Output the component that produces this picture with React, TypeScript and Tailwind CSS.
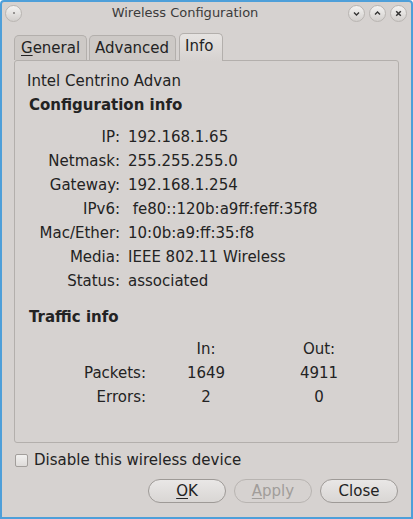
const font = { fontFamily: '"DejaVu Sans", Verdana, sans-serif' }

const config = [
  ['IP:', '192.168.1.65'],
  ['Netmask:', '255.255.255.0'],
  ['Gateway:', '192.168.1.254'],
  ['IPv6:', '\u00a0fe80::120b:a9ff:feff:35f8'],
  ['Mac/Ether:', '10:0b:a9:ff:35:f8'],
  ['Media:', 'IEEE 802.11 Wireless'],
  ['Status:', 'associated'],
]

function TitleButton({ children }: { children: React.ReactNode }) {
  return (
    <div className="w-[17px] h-[17px] rounded-full border border-[#b9b5b2] bg-gradient-to-b from-[#f4f3f2] to-[#d2cfcc] flex items-center justify-center">
      {children}
    </div>
  )
}

function Btn({ children, disabled }: { children: React.ReactNode; disabled?: boolean }) {
  return (
    <div
      className={
        'w-[78px] h-[24px] rounded-full border flex items-center justify-center text-[15px] ' +
        (disabled
          ? 'border-[#b8b4b1] bg-[#d6d2d0] text-[#a19d9a]'
          : 'border-[#9e9a97] bg-gradient-to-b from-[#e9e7e6] to-[#d9d6d4] text-[#232323]')
      }
    >
      {children}
    </div>
  )
}

function App() {
  return (
    <div style={font} className="w-[413px] h-[519px] bg-[#d6d2d0] border-2 border-[#4e9fd9] rounded-t-[4px] flex flex-col text-[#232323] overflow-hidden">
      {/* title bar */}
      <div className="h-[22px] flex items-center pl-[3px] relative">
        <TitleButton>
          <div className="w-[2px] h-[2px] rounded-full bg-[#7d7a78]" />
        </TitleButton>
        <div className="flex-1 text-center text-[13px] text-[#3b3b3b]">Wireless Configuration</div>
        <div className="flex gap-[4px] pr-[4px]">
          <TitleButton>
            <svg width="9" height="9" viewBox="0 0 9 9"><path d="M2 3.5 L4.5 6 L7 3.5" fill="none" stroke="#333" strokeWidth="1.4" /></svg>
          </TitleButton>
          <TitleButton>
            <svg width="9" height="9" viewBox="0 0 9 9"><path d="M2 5.5 L4.5 3 L7 5.5" fill="none" stroke="#333" strokeWidth="1.4" /></svg>
          </TitleButton>
          <TitleButton>
            <svg width="9" height="9" viewBox="0 0 9 9"><path d="M2.2 2.2 L6.8 6.8 M6.8 2.2 L2.2 6.8" fill="none" stroke="#333" strokeWidth="1.5" /></svg>
          </TitleButton>
        </div>
      </div>

      {/* tabs */}
      <div className="mt-[9px] ml-[12px] flex items-end h-[27px] relative z-10">
        <div className="w-[73px] h-[25px] border border-b-0 border-[#b3afac] rounded-t-[5px] bg-[#cdc9c6] text-[15px] flex items-center pl-[6px]">
          <span><span className="underline underline-offset-2">G</span>eneral</span>
        </div>
        <div className="ml-[2px] w-[87px] h-[25px] border border-b-0 border-[#b3afac] rounded-t-[5px] bg-[#cdc9c6] text-[15px] flex items-center pl-[5px]">
          Advanced
        </div>
        <div className="ml-[3px] w-[44px] h-[28px] border border-b-0 border-[#b3afac] rounded-t-[5px] bg-gradient-to-b from-[#e6e3e1] to-[#d6d2d0] text-[15px] flex items-center pl-[5px] pb-[3px] mb-[-1px]">
          Info
        </div>
      </div>

      {/* panel */}
      <div className="mx-[12px] h-[383px] border border-[#b3afac] rounded-[3px] px-[12px] pt-[8px] text-[15px]">
        <div className="h-[24px] flex items-center">Intel Centrino Advan</div>
        <div className="h-[24px] flex items-center font-bold pl-[2px]">Configuration info</div>
        <div className="mt-[8px]">
          {config.map(([k, v]) => (
            <div key={k} className="h-[24px] flex items-center">
              <div className="w-[93px] text-right">{k}</div>
              <div className="ml-[8px] whitespace-pre">{v}</div>
            </div>
          ))}
        </div>
        <div className="mt-[12px] h-[24px] flex items-center font-bold pl-[2px]">Traffic info</div>
        <div className="mt-[8px]">
          {[
            ['', 'In:', 'Out:'],
            ['Packets:', '1649', '4911'],
            ['Errors:', '2', '0'],
          ].map(([a, b, c], i) => (
            <div key={i} className="h-[24px] flex items-center">
              <div className="w-[119px] text-right">{a}</div>
              <div className="w-[120px] text-center">{b}</div>
              <div className="w-[106px] text-center">{c}</div>
            </div>
          ))}
        </div>
      </div>

      {/* checkbox */}
      <div className="mt-[9px] ml-[13px] h-[17px] flex items-center gap-[6px] text-[15px]">
        <div className="w-[13px] h-[13px] rounded-[2px] border border-[#a29e9b] bg-gradient-to-b from-[#f2f1f0] to-[#dedbd9]" />
        <span>Disable this wireless device</span>
      </div>

      {/* buttons */}
      <div className="mt-[10px] flex justify-end gap-[8px] pr-[13px]">
        <Btn><span><span className="underline underline-offset-2">O</span>K</span></Btn>
        <Btn disabled><span><span className="underline underline-offset-2">A</span>pply</span></Btn>
        <Btn>Close</Btn>
      </div>
    </div>
  )
}

export default App
